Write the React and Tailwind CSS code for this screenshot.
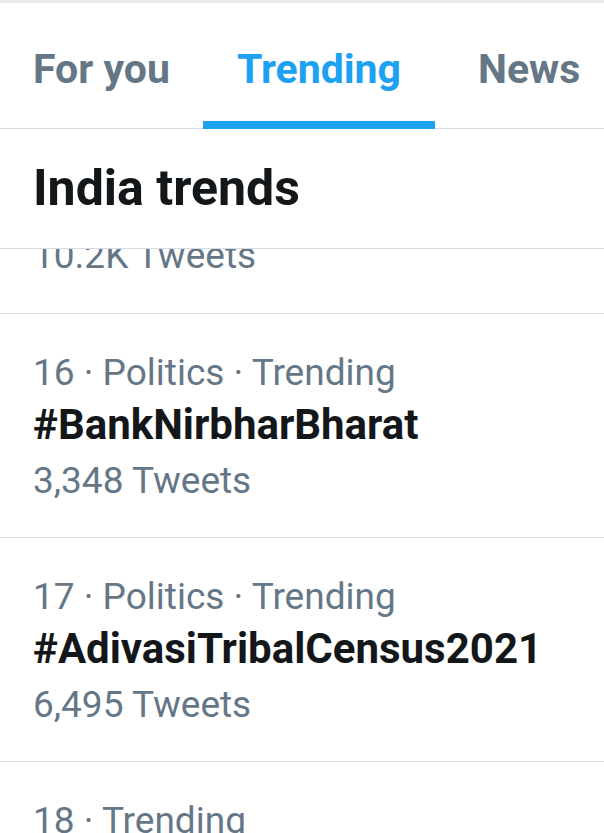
import React from "react";

const font = { fontFamily: "Roboto, 'Liberation Sans', sans-serif" };

function Tab({ label, active, px }) {
  return (
    <div className={`relative flex flex-col ${px}`}>
      <div
        className={`pt-[41px] text-[41px] leading-[50px] font-bold whitespace-nowrap ${
          active ? "text-[#1da1f2]" : "text-[#657786]"
        }`}
      >
        {label}
      </div>
      {active && (
        <div className="absolute left-0 right-0 bottom-[-1px] h-[8px] bg-[#1da1f2]" />
      )}
    </div>
  );
}

function Trend({ meta, title, count }) {
  return (
    <div className="flex flex-col border-b border-[#d5dde2] pl-[33px] pt-[32px] pb-[29px]">
      <div className="text-[37px] leading-[54px] text-[#657786] whitespace-nowrap">{meta}</div>
      <div className="text-[42px] leading-[50px] font-bold text-[#14171a] whitespace-nowrap">{title}</div>
      <div className="mt-[4px] text-[37px] leading-[54px] text-[#657786] whitespace-nowrap">{count}</div>
    </div>
  );
}

export default function App() {
  return (
    <div style={font} className="w-[604px] h-[833px] overflow-hidden bg-white flex flex-col">
      <div className="h-[3px] bg-[#ebebeb] shrink-0" />
      <div className="flex h-[126px] shrink-0 border-b border-[#d5dde2]">
        <Tab label="For you" px="pl-[33px] pr-[33px]" />
        <Tab label="Trending" active px="px-[34px]" />
        <Tab label="News" px="pl-[43px]" />
      </div>
      <div className="shrink-0 border-b border-[#d5dde2] pl-[33px] pt-[29px] pb-[30px]">
        <div className="text-[50px] leading-[60px] font-bold text-[#14171a]">India trends</div>
      </div>
      <div className="flex-1 overflow-hidden flex flex-col">
        <div className="border-b border-[#d5dde2] pl-[33px] pb-[30px]">
          <div className="-mt-[20px] text-[37px] leading-[54px] text-[#657786]">10.2K Tweets</div>
        </div>
        <Trend meta="16 · Politics · Trending" title="#BankNirbharBharat" count="3,348 Tweets" />
        <Trend meta="17 · Politics · Trending" title="#AdivasiTribalCensus2021" count="6,495 Tweets" />
        <div className="pl-[33px] pt-[32px]">
          <div className="text-[37px] leading-[54px] text-[#657786]">18 · Trending</div>
        </div>
      </div>
    </div>
  );
}
